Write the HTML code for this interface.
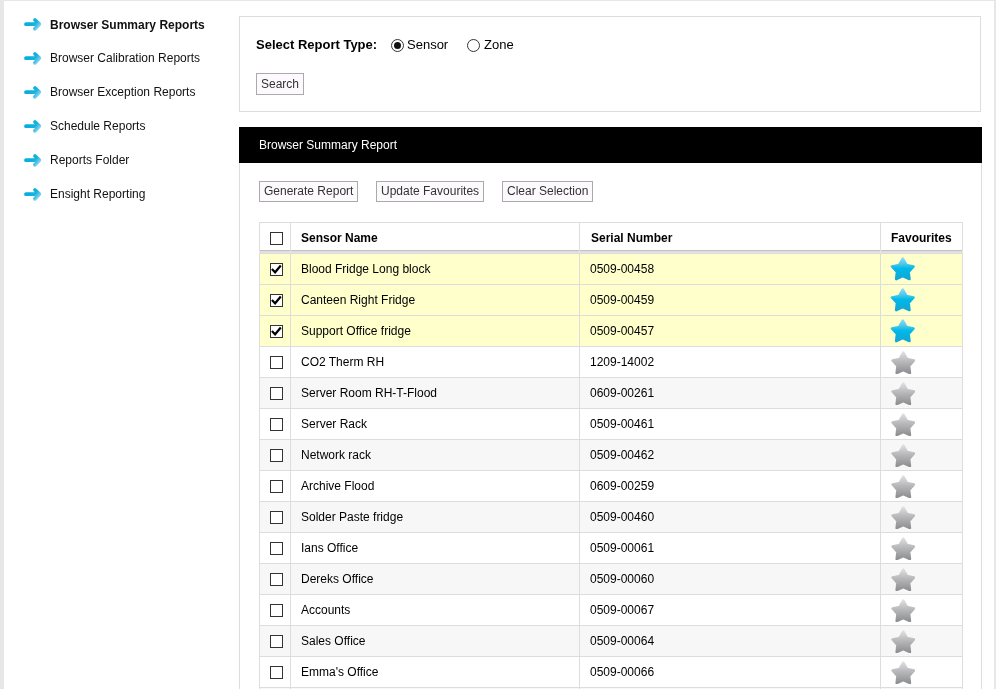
<!DOCTYPE html>
<html><head><meta charset="utf-8"><title>Browser Summary Reports</title>
<style>
html,body{margin:0;padding:0;}
body{width:996px;height:689px;overflow:hidden;background:#e8e7e8;font-family:"Liberation Sans",Arial,sans-serif;font-size:12px;color:#000;position:relative;}
#pagebg{position:absolute;left:4px;top:1px;width:990px;height:688px;background:#fff;}
#page{position:absolute;left:4px;top:1px;width:990px;height:688px;will-change:transform;}
ul.side{list-style:none;margin:0;padding:0;position:absolute;left:20px;top:6px;}
ul.side li{height:34px;line-height:34px;position:relative;white-space:nowrap;font-size:12px;color:#111;}
ul.side li span{position:absolute;left:26px;top:0;}
ul.side li.act{font-weight:bold;}
ul.side li.act span{top:1px;}
ul.side li .arr{position:absolute;left:-1px;top:10px;}
#box1{position:absolute;left:235px;top:15px;width:740px;height:94px;border:1px solid #ddd;}
#box1 .lbl{position:absolute;left:16px;top:20px;font-weight:bold;font-size:13px;line-height:16px;white-space:nowrap;}
.radio{position:absolute;width:11px;height:11px;border:1px solid #333;border-radius:50%;background:#fff;}
.radio.on::after{content:"";position:absolute;left:2px;top:2px;width:7px;height:7px;border-radius:50%;background:#111;}
.rl{position:absolute;font-size:13px;line-height:16px;top:20px;}
.btn{position:absolute;box-sizing:border-box;height:21px;line-height:19px;border:1px solid #aaa;background:#fdfafd;color:#333;font-size:12px;padding:0 4px;white-space:nowrap;}
#bar{position:absolute;left:235px;top:126px;width:743px;height:36px;background:#000;color:#fff;line-height:36px;font-size:12px;}
#bar span{margin-left:20px;}
#panel{position:absolute;left:235px;top:162px;width:741px;height:540px;border:1px solid #ddd;border-top:none;}
table{position:absolute;left:255px;top:221px;width:703px;border-collapse:collapse;table-layout:fixed;}
td,th{box-sizing:border-box;border:1px solid #ddd;padding:0;font-size:12px;text-align:left;white-space:nowrap;overflow:hidden;}
th{height:27px;font-weight:bold;border-bottom:none;padding-top:4px;}
tr.band td{height:4px;border-top:none;border-left-color:#e6e6e6;border-right-color:#e6e6e6;background:linear-gradient(#bdbdbd 0,#c8c8c8 50%,#dedede 50%,#e2e2e2 100%);}
td{height:31px;}
tr.sel td{background:#ffffcc;}
tr.alt td{background:#f7f7f7;}
.c0{width:31px;} .c1{width:289px;} .c2{width:301px;} .c3{width:82px;}
td.c1,td.c2{padding-left:10px;}
th.c1,th.c2,th.c3{padding-left:10px;}
th.c2{padding-left:11px;}
.cb{display:block;box-sizing:border-box;width:13px;height:13px;border:1px solid #333;background:#fff;margin-left:10px;position:relative;}
.cb svg{position:absolute;left:0;top:0;}
.star{display:block;margin-left:8px;margin-top:-2px;}
</style></head><body>
<svg width="0" height="0" style="position:absolute"><defs>
<linearGradient id="sb" gradientUnits="userSpaceOnUse" x1="0" y1="2" x2="0" y2="25"><stop offset="0" stop-color="#9adcf5"/><stop offset="0.3" stop-color="#4cc8ec"/><stop offset="0.5" stop-color="#00b9e8"/><stop offset="1" stop-color="#14a4d4"/></linearGradient>
<linearGradient id="sg" gradientUnits="userSpaceOnUse" x1="0" y1="3" x2="0" y2="26"><stop offset="0" stop-color="#e4e4e5"/><stop offset="0.45" stop-color="#b9b9bc"/><stop offset="1" stop-color="#8b8c8e"/></linearGradient>
<linearGradient id="ab" gradientUnits="userSpaceOnUse" x1="8" y1="3" x2="18" y2="11"><stop offset="0" stop-color="#08aedd"/><stop offset="0.45" stop-color="#19b3df"/><stop offset="1" stop-color="#b5e2f5"/></linearGradient>
</defs></svg>
<div id="pagebg"></div>
<div id="page">
<ul class="side"><li class="act"><svg class="arr" width="20" height="16" viewBox="0 0 20 16"><path d="M3 7.2 H14 M12 3 L16.3 7.2 L12 11.8" fill="none" stroke="url(#ab)" stroke-width="3.8" stroke-linecap="round" stroke-linejoin="round"/></svg><span>Browser Summary Reports</span></li><li class=""><svg class="arr" width="20" height="16" viewBox="0 0 20 16"><path d="M3 7.2 H14 M12 3 L16.3 7.2 L12 11.8" fill="none" stroke="url(#ab)" stroke-width="3.8" stroke-linecap="round" stroke-linejoin="round"/></svg><span>Browser Calibration Reports</span></li><li class=""><svg class="arr" width="20" height="16" viewBox="0 0 20 16"><path d="M3 7.2 H14 M12 3 L16.3 7.2 L12 11.8" fill="none" stroke="url(#ab)" stroke-width="3.8" stroke-linecap="round" stroke-linejoin="round"/></svg><span>Browser Exception Reports</span></li><li class=""><svg class="arr" width="20" height="16" viewBox="0 0 20 16"><path d="M3 7.2 H14 M12 3 L16.3 7.2 L12 11.8" fill="none" stroke="url(#ab)" stroke-width="3.8" stroke-linecap="round" stroke-linejoin="round"/></svg><span>Schedule Reports</span></li><li class=""><svg class="arr" width="20" height="16" viewBox="0 0 20 16"><path d="M3 7.2 H14 M12 3 L16.3 7.2 L12 11.8" fill="none" stroke="url(#ab)" stroke-width="3.8" stroke-linecap="round" stroke-linejoin="round"/></svg><span>Reports Folder</span></li><li class=""><svg class="arr" width="20" height="16" viewBox="0 0 20 16"><path d="M3 7.2 H14 M12 3 L16.3 7.2 L12 11.8" fill="none" stroke="url(#ab)" stroke-width="3.8" stroke-linecap="round" stroke-linejoin="round"/></svg><span>Ensight Reporting</span></li></ul>
<div id="box1">
 <div class="lbl">Select Report Type:</div>
 <span class="radio on" style="left:151px;top:22px"></span><span class="rl" style="left:167px">Sensor</span>
 <span class="radio" style="left:227px;top:22px"></span><span class="rl" style="left:244px">Zone</span>
 <div class="btn" style="left:16px;top:56px;height:22px;line-height:20px">Search</div>
</div>
<div id="bar"><span>Browser Summary Report</span></div>
<div id="panel"></div>
<div class="btn" style="left:255px;top:180px">Generate Report</div>
<div class="btn" style="left:372px;top:180px">Update Favourites</div>
<div class="btn" style="left:498px;top:180px">Clear Selection</div>
<table>
<tr><th class="c0"><span class="cb"></span></th><th class="c1">Sensor Name</th><th class="c2">Serial Number</th><th class="c3">Favourites</th></tr>
<tr class="band"><td></td><td></td><td></td><td></td></tr>
<tr class="sel"><td class="c0"><span class="cb"><svg width="11" height="11" viewBox="0 0 11 11"><path d="M0.9 5.0 L4.1 8.3 L9.8 1.5" fill="none" stroke="#000" stroke-width="2.2"/></svg></span></td><td class="c1">Blood Fridge Long block</td><td class="c2">0509-00458</td><td class="c3"><svg class="star" width="26" height="26" viewBox="0 0 26 26"><path d="M13.80 3.60 L17.39 9.96 L24.55 11.41 L19.60 16.79 L20.44 24.04 L13.80 21.00 L7.16 24.04 L8.00 16.79 L3.05 11.41 L10.21 9.96 Z" fill="url(#sb)" stroke="url(#sb)" stroke-width="2.6" stroke-linejoin="round"/></svg></td></tr><tr class="sel"><td class="c0"><span class="cb"><svg width="11" height="11" viewBox="0 0 11 11"><path d="M0.9 5.0 L4.1 8.3 L9.8 1.5" fill="none" stroke="#000" stroke-width="2.2"/></svg></span></td><td class="c1">Canteen Right Fridge</td><td class="c2">0509-00459</td><td class="c3"><svg class="star" width="26" height="26" viewBox="0 0 26 26"><path d="M13.80 3.60 L17.39 9.96 L24.55 11.41 L19.60 16.79 L20.44 24.04 L13.80 21.00 L7.16 24.04 L8.00 16.79 L3.05 11.41 L10.21 9.96 Z" fill="url(#sb)" stroke="url(#sb)" stroke-width="2.6" stroke-linejoin="round"/></svg></td></tr><tr class="sel"><td class="c0"><span class="cb"><svg width="11" height="11" viewBox="0 0 11 11"><path d="M0.9 5.0 L4.1 8.3 L9.8 1.5" fill="none" stroke="#000" stroke-width="2.2"/></svg></span></td><td class="c1">Support Office fridge</td><td class="c2">0509-00457</td><td class="c3"><svg class="star" width="26" height="26" viewBox="0 0 26 26"><path d="M13.80 3.60 L17.39 9.96 L24.55 11.41 L19.60 16.79 L20.44 24.04 L13.80 21.00 L7.16 24.04 L8.00 16.79 L3.05 11.41 L10.21 9.96 Z" fill="url(#sb)" stroke="url(#sb)" stroke-width="2.6" stroke-linejoin="round"/></svg></td></tr><tr class=""><td class="c0"><span class="cb"></span></td><td class="c1">CO2 Therm RH</td><td class="c2">1209-14002</td><td class="c3"><svg class="star" width="26" height="26" viewBox="0 0 26 26"><path d="M14.30 4.70 L17.89 10.96 L24.95 12.44 L20.10 17.79 L20.88 24.96 L14.30 22.00 L7.72 24.96 L8.50 17.79 L3.65 12.44 L10.71 10.96 Z" fill="url(#sg)" stroke="url(#sg)" stroke-width="2.6" stroke-linejoin="round"/></svg></td></tr><tr class="alt"><td class="c0"><span class="cb"></span></td><td class="c1">Server Room RH-T-Flood</td><td class="c2">0609-00261</td><td class="c3"><svg class="star" width="26" height="26" viewBox="0 0 26 26"><path d="M14.30 4.70 L17.89 10.96 L24.95 12.44 L20.10 17.79 L20.88 24.96 L14.30 22.00 L7.72 24.96 L8.50 17.79 L3.65 12.44 L10.71 10.96 Z" fill="url(#sg)" stroke="url(#sg)" stroke-width="2.6" stroke-linejoin="round"/></svg></td></tr><tr class=""><td class="c0"><span class="cb"></span></td><td class="c1">Server Rack</td><td class="c2">0509-00461</td><td class="c3"><svg class="star" width="26" height="26" viewBox="0 0 26 26"><path d="M14.30 4.70 L17.89 10.96 L24.95 12.44 L20.10 17.79 L20.88 24.96 L14.30 22.00 L7.72 24.96 L8.50 17.79 L3.65 12.44 L10.71 10.96 Z" fill="url(#sg)" stroke="url(#sg)" stroke-width="2.6" stroke-linejoin="round"/></svg></td></tr><tr class="alt"><td class="c0"><span class="cb"></span></td><td class="c1">Network rack</td><td class="c2">0509-00462</td><td class="c3"><svg class="star" width="26" height="26" viewBox="0 0 26 26"><path d="M14.30 4.70 L17.89 10.96 L24.95 12.44 L20.10 17.79 L20.88 24.96 L14.30 22.00 L7.72 24.96 L8.50 17.79 L3.65 12.44 L10.71 10.96 Z" fill="url(#sg)" stroke="url(#sg)" stroke-width="2.6" stroke-linejoin="round"/></svg></td></tr><tr class=""><td class="c0"><span class="cb"></span></td><td class="c1">Archive Flood</td><td class="c2">0609-00259</td><td class="c3"><svg class="star" width="26" height="26" viewBox="0 0 26 26"><path d="M14.30 4.70 L17.89 10.96 L24.95 12.44 L20.10 17.79 L20.88 24.96 L14.30 22.00 L7.72 24.96 L8.50 17.79 L3.65 12.44 L10.71 10.96 Z" fill="url(#sg)" stroke="url(#sg)" stroke-width="2.6" stroke-linejoin="round"/></svg></td></tr><tr class="alt"><td class="c0"><span class="cb"></span></td><td class="c1">Solder Paste fridge</td><td class="c2">0509-00460</td><td class="c3"><svg class="star" width="26" height="26" viewBox="0 0 26 26"><path d="M14.30 4.70 L17.89 10.96 L24.95 12.44 L20.10 17.79 L20.88 24.96 L14.30 22.00 L7.72 24.96 L8.50 17.79 L3.65 12.44 L10.71 10.96 Z" fill="url(#sg)" stroke="url(#sg)" stroke-width="2.6" stroke-linejoin="round"/></svg></td></tr><tr class=""><td class="c0"><span class="cb"></span></td><td class="c1">Ians Office</td><td class="c2">0509-00061</td><td class="c3"><svg class="star" width="26" height="26" viewBox="0 0 26 26"><path d="M14.30 4.70 L17.89 10.96 L24.95 12.44 L20.10 17.79 L20.88 24.96 L14.30 22.00 L7.72 24.96 L8.50 17.79 L3.65 12.44 L10.71 10.96 Z" fill="url(#sg)" stroke="url(#sg)" stroke-width="2.6" stroke-linejoin="round"/></svg></td></tr><tr class="alt"><td class="c0"><span class="cb"></span></td><td class="c1">Dereks Office</td><td class="c2">0509-00060</td><td class="c3"><svg class="star" width="26" height="26" viewBox="0 0 26 26"><path d="M14.30 4.70 L17.89 10.96 L24.95 12.44 L20.10 17.79 L20.88 24.96 L14.30 22.00 L7.72 24.96 L8.50 17.79 L3.65 12.44 L10.71 10.96 Z" fill="url(#sg)" stroke="url(#sg)" stroke-width="2.6" stroke-linejoin="round"/></svg></td></tr><tr class=""><td class="c0"><span class="cb"></span></td><td class="c1">Accounts</td><td class="c2">0509-00067</td><td class="c3"><svg class="star" width="26" height="26" viewBox="0 0 26 26"><path d="M14.30 4.70 L17.89 10.96 L24.95 12.44 L20.10 17.79 L20.88 24.96 L14.30 22.00 L7.72 24.96 L8.50 17.79 L3.65 12.44 L10.71 10.96 Z" fill="url(#sg)" stroke="url(#sg)" stroke-width="2.6" stroke-linejoin="round"/></svg></td></tr><tr class="alt"><td class="c0"><span class="cb"></span></td><td class="c1">Sales Office</td><td class="c2">0509-00064</td><td class="c3"><svg class="star" width="26" height="26" viewBox="0 0 26 26"><path d="M14.30 4.70 L17.89 10.96 L24.95 12.44 L20.10 17.79 L20.88 24.96 L14.30 22.00 L7.72 24.96 L8.50 17.79 L3.65 12.44 L10.71 10.96 Z" fill="url(#sg)" stroke="url(#sg)" stroke-width="2.6" stroke-linejoin="round"/></svg></td></tr><tr class=""><td class="c0"><span class="cb"></span></td><td class="c1">Emma's Office</td><td class="c2">0509-00066</td><td class="c3"><svg class="star" width="26" height="26" viewBox="0 0 26 26"><path d="M14.30 4.70 L17.89 10.96 L24.95 12.44 L20.10 17.79 L20.88 24.96 L14.30 22.00 L7.72 24.96 L8.50 17.79 L3.65 12.44 L10.71 10.96 Z" fill="url(#sg)" stroke="url(#sg)" stroke-width="2.6" stroke-linejoin="round"/></svg></td></tr><tr class="alt"><td class="c0"><span class="cb"></span></td><td class="c1">Reception</td><td class="c2">0509-00065</td><td class="c3"><svg class="star" width="26" height="26" viewBox="0 0 26 26"><path d="M14.30 4.70 L17.89 10.96 L24.95 12.44 L20.10 17.79 L20.88 24.96 L14.30 22.00 L7.72 24.96 L8.50 17.79 L3.65 12.44 L10.71 10.96 Z" fill="url(#sg)" stroke="url(#sg)" stroke-width="2.6" stroke-linejoin="round"/></svg></td></tr>
</table>
</div>
</body></html>
